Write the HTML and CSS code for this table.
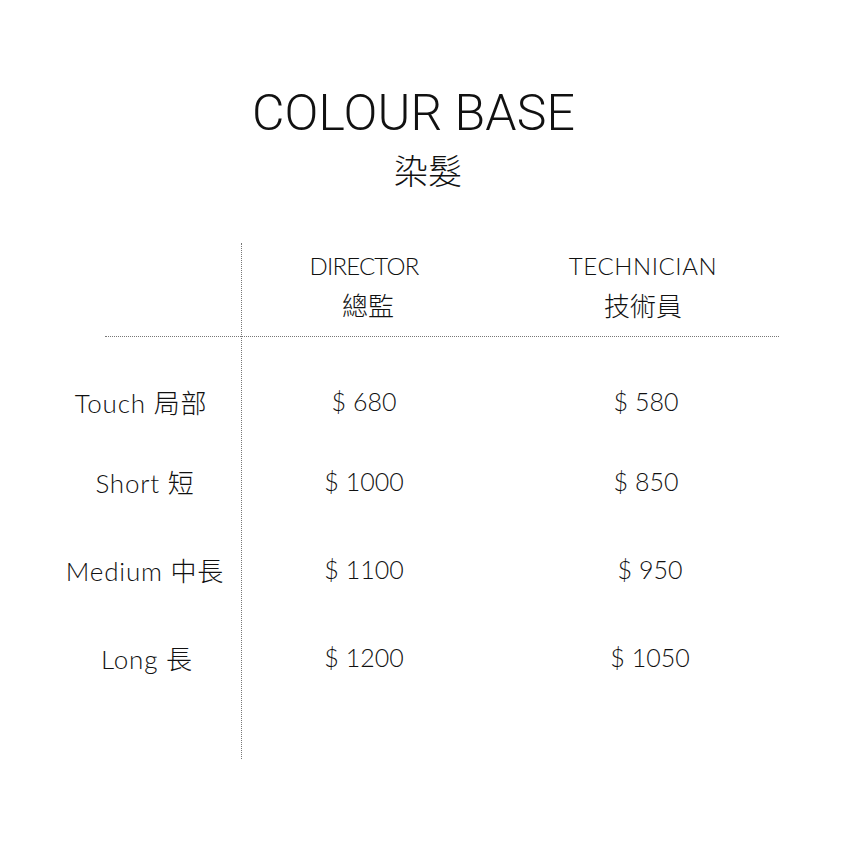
FILE: index.html
```html
<!DOCTYPE html>
<html lang="zh-Hant">
<head>
<meta charset="utf-8">
<title>Colour Base</title>
<link rel="stylesheet" href="styles.css">
</head>
<body>
<main class="page">
  <header class="title-block">
    <h1 class="title">COLOUR BASE</h1>
    <p class="subtitle">染髮</p>
  </header>
  <section class="table">
    <div class="vline"></div>
    <div class="head-row">
      <div class="head-cell col2"><span class="en">DIRECTOR</span><span class="zh zh-dir">總監</span></div>
      <div class="head-cell col3"><span class="en en-wide">TECHNICIAN</span><span class="zh">技術員</span></div>
    </div>
    <div class="row r1"><span class="label">Touch 局部</span><span class="price col2">$ 680</span><span class="price col3">$ 580</span></div>
    <div class="row r2"><span class="label">Short 短</span><span class="price col2">$ 1000</span><span class="price col3">$ 850</span></div>
    <div class="row r3"><span class="label">Medium 中長</span><span class="price col2">$ 1100</span><span class="price col3 nudge">$ 950</span></div>
    <div class="row r4"><span class="label">Long 長</span><span class="price col2">$ 1200</span><span class="price col3 nudge">$ 1050</span></div>
    <div class="spacer"></div>
  </section>
</main>
</body>
</html>
```

FILE: styles.css
```css
html, body {
  margin: 0;
  padding: 0;
  background: #ffffff;
}
body {
  width: 844px;
  height: 844px;
  overflow: hidden;
  color: #111;
  font-family: Lato, "Noto Sans CJK TC", sans-serif;
  font-weight: 300;
}
.page {
  display: flex;
  flex-direction: column;
  padding-top: 85px;
}
.title-block {
  display: flex;
  flex-direction: column;
  align-items: center;
}
.title {
  margin: 0 0 0 -17px;
  font-family: Roboto, "Liberation Sans", sans-serif;
  font-weight: 300;
  font-size: 50px;
  line-height: 56px;
  letter-spacing: 0.1px;
  color: #111;
}
.subtitle {
  margin: 9px 0 0 12px;
  font-family: "Noto Sans CJK TC", sans-serif;
  font-weight: 300;
  font-size: 34px;
  line-height: 40px;
}
.table {
  margin-top: 53px;
  margin-left: 49px;
  display: grid;
  grid-template-columns: 192px 246px 292px;
  grid-template-rows: 94px 24px 80px 80px 96px 80px 62px;
  width: 730px;
}
.vline {
  grid-column: 2;
  grid-row: 1 / -1;
  border-left: 1px dotted #777;
}
.head-row, .row {
  grid-column: 1 / -1;
  display: grid;
  grid-template-columns: 192px 246px 292px;
}
.head-row {
  grid-row: 1;
  border-bottom: 1px dotted #777;
  margin-left: 56px;
  grid-template-columns: 136px 246px 292px;
}
.head-cell {
  display: flex;
  flex-direction: column;
  align-items: center;
  padding-top: 8px;
}
.head-row .col2 { grid-column: 2; }
.head-row .col3 { grid-column: 3; padding-left: 20px; }
.en {
  font-size: 24px;
  line-height: 30px;
  letter-spacing: -0.8px;
}
.en-wide {
  letter-spacing: 0.6px;
}
.zh {
  font-family: "Noto Sans CJK TC", sans-serif;
  font-weight: 300;
  font-size: 26px;
  line-height: 36px;
  margin-top: 6px;
}
.zh-dir {
  margin-left: 8px;
}
.row {
  align-items: center;
}
.r1 { grid-row: 3; }
.r2 { grid-row: 4; }
.r3 { grid-row: 5; }
.r4 { grid-row: 6; }
.label {
  text-align: center;
  font-size: 26px;
  letter-spacing: 0.8px;
}
.r1 .label { margin-right: 8px; }
.r4 .label { margin-left: 4px; }
.price {
  text-align: center;
  font-size: 25px;
}
.row .col3 { padding-left: 26px; }
.row .col3.nudge { padding-left: 34px; }
.spacer { grid-row: 7; }
```
